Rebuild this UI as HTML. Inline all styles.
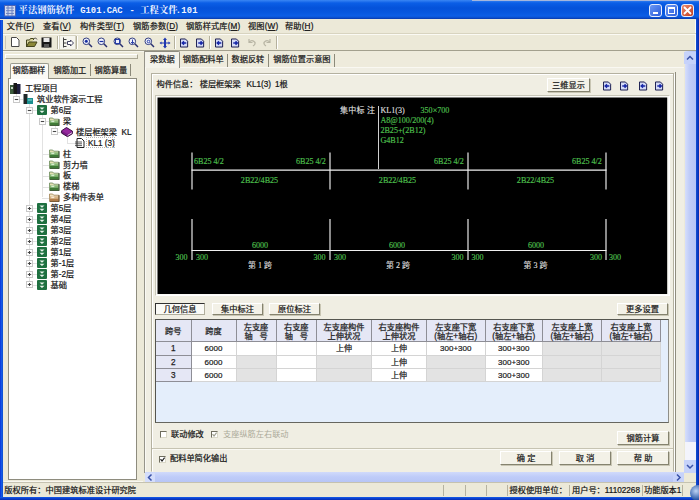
<!DOCTYPE html>
<html><head><meta charset="utf-8"><title>平法钢筋软件</title>
<style>
html,body{margin:0;padding:0;}
body{width:699px;height:500px;overflow:hidden;position:relative;background:#ECE9D8;font-family:"Liberation Sans","Noto Sans CJK SC",sans-serif;font-size:8.2px;color:#000;}
.a{position:absolute;white-space:nowrap;}
.t{position:absolute;white-space:nowrap;line-height:12px;height:12px;color:#101010;-webkit-text-stroke:0.22px #202020;}
.c{position:absolute;white-space:nowrap;line-height:12px;height:12px;text-align:center;color:#101010;}
#title{left:0;top:0;width:699px;height:19.300px;background:linear-gradient(#3A86F4 0,#0B5EE6 3px,#0452DA 8px,#0656DE 12px,#0C5EE6 16px,#0A50D0 17.500px,#0834A4 19.300px);}
#title .txt{left:19px;top:2.900px;color:#F0F4FF;font-weight:bold;font-size:9.3px;line-height:14px;font-family:"Liberation Serif","Noto Serif CJK SC",serif;}
#title .txt i{font-style:normal;font-family:"Liberation Mono",monospace;font-size:8.8px;}
.wb{position:absolute;top:3.800px;width:11.200px;height:11.400px;border:1px solid #E8EEFC;border-radius:3px;background:linear-gradient(135deg,#6A98F4,#2A5CDC);box-sizing:content-box}
.btn{-webkit-text-stroke:0.22px #202020;position:absolute;box-sizing:border-box;background:#F3F1E7;border:1px solid;border-color:#FFFFFF #85836F #85836F #FFFFFF;box-shadow:1px 1px 0 #C9C6B4;text-align:center;font-size:8.2px;line-height:12px;padding-top:0.8px;white-space:nowrap;color:#101010}
.g{fill:#4CBE4C;stroke:#4CBE4C;stroke-width:0.18px;font-family:"Liberation Serif",serif;font-size:8.1px;}
.w{fill:#DCDCDC;stroke:#DCDCDC;stroke-width:0.15px;font-family:"Liberation Serif","Noto Sans CJK SC",serif;font-size:8.1px;}
.hd{-webkit-text-stroke:0.25px #282828;position:absolute;box-sizing:border-box;background:#E5E7F5;border-right:1px solid #8E8E96;border-bottom:1px solid #8E8E96;text-align:center;line-height:9px;font-size:8.2px;color:#181818;white-space:nowrap;}
.cell{-webkit-text-stroke:0.2px #282828;position:absolute;box-sizing:border-box;padding-top:1.3px;background:#fff;border-right:1px solid #D4D4D4;border-bottom:1px solid #D4D4D4;text-align:center;line-height:12px;font-size:8px;white-space:nowrap;color:#101010}
.dis{background:#E3E3E3}
</style></head><body>
<div id="title" class="a">
 <svg class="a" style="left:3.500px;top:4.500px" width="13" height="12"><rect x="0.500" y="0.500" width="11" height="10.500" fill="#D2DCF0" stroke="#4A64B8"/><path d="M2 3h8M2 5.700h8M2 8.400h8M4 1v10M8 1v10" stroke="#6A80C0" stroke-width="1" fill="none"/></svg>
 <div class="a txt" style="left:18.6px">平法钢筋软件</div><div class="a txt" style="left:80.3px"><i>G101.CAC</i></div><div class="a txt" style="left:129.5px"><i>-</i></div><div class="a txt" style="left:140.3px">工程文件</div><div class="a txt" style="left:175.7px"><i style="letter-spacing:0.25px">.101</i></div>
 <div class="wb" style="left:649.300px"><div class="a" style="left:2.500px;top:7px;width:5px;height:2px;background:#fff"></div></div>
 <div class="wb" style="left:665.200px"><div class="a" style="left:2.200px;top:2.200px;width:5px;height:4.200px;border:1px solid #fff;border-top-width:2px;box-sizing:content-box"></div></div>
 <div class="wb" style="left:681px;background:linear-gradient(135deg,#EC8C70,#C23C1E)"><svg class="a" style="left:1.100px;top:1.200px" width="9" height="9"><path d="M1 1L8 8M8 1L1 8" stroke="#fff" stroke-width="1.8"/></svg></div>
</div>
<div class="a" style="left:472px;top:0;width:227px;height:1.200px;background:#A4B6DC"></div>
<div class="a" style="left:695px;top:20px;width:1px;height:31px;background:#FBFBF8"></div>
<div class="a" style="left:0;top:20px;width:3px;height:480px;background:linear-gradient(90deg,#0831D9,#1660E8 60%,#0A48C8)"></div>
<div class="a" style="left:696.400px;top:19px;width:2.600px;height:481px;background:linear-gradient(90deg,#1250D0,#0A3CC8 50%,#0628A8)"></div>
<div class="a" style="left:0;top:497px;width:699px;height:3px;background:linear-gradient(#1660E8,#0A3ACC 60%,#0831B0)"></div>
<div class="t" style="left:6.8px;top:21px;letter-spacing:0.15px">文件(<u>F</u>)</div>
<div class="t" style="left:43.0px;top:21px;letter-spacing:0.15px">查看(<u>V</u>)</div>
<div class="t" style="left:80.0px;top:21px;letter-spacing:0.15px">构件类型(<u>T</u>)</div>
<div class="t" style="left:133.0px;top:21px;letter-spacing:0.15px">钢筋参数(<u>D</u>)</div>
<div class="t" style="left:186.0px;top:21px;letter-spacing:0.15px">钢筋样式库(<u>M</u>)</div>
<div class="t" style="left:248.0px;top:21px;letter-spacing:0.15px">视图(<u>W</u>)</div>
<div class="t" style="left:285.0px;top:21px;letter-spacing:0.15px">帮助(<u>H</u>)</div>
<div class="a" style="left:3px;top:34px;width:693px;height:1px;background:#FBFAF4"></div>
<div class="a" style="left:3px;top:33px;width:693px;height:1px;background:#D8D4C0"></div>
<div class="a" style="left:3px;top:50px;width:693px;height:1px;background:#A3A08E"></div>
<div class="a" style="left:3px;top:51px;width:141px;height:1px;background:#F6F5EC"></div>
<div class="a" style="left:57px;top:36px;width:1px;height:13px;background:#B5B19D"></div><div class="a" style="left:58px;top:36px;width:1px;height:13px;background:#fff"></div>
<div class="a" style="left:76px;top:36px;width:1px;height:13px;background:#B5B19D"></div><div class="a" style="left:77px;top:36px;width:1px;height:13px;background:#fff"></div>
<div class="a" style="left:174px;top:36px;width:1px;height:13px;background:#B5B19D"></div><div class="a" style="left:175px;top:36px;width:1px;height:13px;background:#fff"></div>
<div class="a" style="left:209px;top:36px;width:1px;height:13px;background:#B5B19D"></div><div class="a" style="left:210px;top:36px;width:1px;height:13px;background:#fff"></div>
<div class="a" style="left:276px;top:36px;width:1px;height:13px;background:#B5B19D"></div><div class="a" style="left:277px;top:36px;width:1px;height:13px;background:#fff"></div>
<div class="a" style="left:5px;top:36px;width:1px;height:13px;background:#C9C6B4"></div>
<svg class="a" style="left:11px;top:37px" width="10" height="11"><path d="M0.500 0.500h5l2.500 2.500v6.500h-7.500z" fill="#fff" stroke="#484848"/></svg>
<svg class="a" style="left:26px;top:37px" width="12" height="11"><path d="M0.5 10V3h3l1-1.500h3V3" fill="#D8D49C" stroke="#45451C" stroke-width="1"/><path d="M0.500 9.500l2.500-4.500h8l-2.500 4.500z" fill="#8C8838" stroke="#45451C" stroke-width="1"/><path d="M8 1.500q2-1.500 3 1" stroke="#303030" fill="none" stroke-width="0.8"/></svg>
<svg class="a" style="left:41px;top:37px" width="11" height="11"><rect x="0.5" y="0.5" width="10" height="10" fill="#181818"/><rect x="2.500" y="1" width="6" height="4" fill="#E8E8E8"/><rect x="3" y="7" width="5" height="3.500" fill="#585858"/></svg>
<div class="a" style="left:59px;top:35px;width:17px;height:15px;box-sizing:border-box;background:#F6F5EE;border:1px solid #D6D3C2"></div>
<svg class="a" style="left:62px;top:37px" width="12" height="11"><path d="M1.500 0.500V10.500M1.500 2.500h3M1.500 6h3M1.500 9.500h3" stroke="#404040" fill="none"/><path d="M5.500 4.500h3V3l3 3l-3 3V7.500h-3z" fill="#fff" stroke="#303050" stroke-width="0.9"/></svg>
<svg class="a" style="left:82px;top:37px" width="12" height="12"><circle cx="4.300" cy="4.300" r="3.300" fill="#F0F2FC" stroke="#303C80" stroke-width="1"/><path d="M6.800 6.800L10 10" stroke="#283070" stroke-width="1.500"/><circle cx="4.300" cy="4.300" r="1.500" fill="#1830A0"/></svg>
<svg class="a" style="left:97px;top:37px" width="12" height="12"><circle cx="4.300" cy="4.300" r="3.300" fill="#F0F2FC" stroke="#303C80" stroke-width="1"/><path d="M6.800 6.800L10 10" stroke="#283070" stroke-width="1.500"/><path d="M2.500 4.500h4" stroke="#1830A0" stroke-width="1.2"/></svg>
<svg class="a" style="left:113px;top:37px" width="12" height="12"><circle cx="4.300" cy="4.300" r="3.300" fill="#F0F2FC" stroke="#303C80" stroke-width="1"/><path d="M6.800 6.800L10 10" stroke="#283070" stroke-width="1.500"/><rect x="2.500" y="2.500" width="4" height="4" fill="none" stroke="#1830A0" stroke-width="0.9"/></svg>
<svg class="a" style="left:128px;top:37px" width="12" height="12"><circle cx="4.300" cy="4.300" r="3.300" fill="#F0F2FC" stroke="#303C80" stroke-width="1"/><path d="M6.800 6.800L10 10" stroke="#283070" stroke-width="1.500"/><path d="M4.500 2.500v4M3 5l1.500 1.500L6 5" stroke="#1830A0" stroke-width="0.9" fill="none"/></svg>
<svg class="a" style="left:144px;top:37px" width="12" height="12"><circle cx="4.300" cy="4.300" r="3.300" fill="#F0F2FC" stroke="#303C80" stroke-width="1"/><path d="M6.800 6.800L10 10" stroke="#283070" stroke-width="1.500"/><circle cx="4.5" cy="4.5" r="1.3" fill="none" stroke="#1830A0" stroke-width="0.9"/></svg>
<svg class="a" style="left:159px;top:37px" width="12" height="12"><path d="M6 0.500L8 3H7v2.500h2.500V4.500L11.500 6L9.500 7.500V6.500H7V9h1L6 11.500L4 9h1V6.500H2.500v1L0.500 6l2-1.500v1H5V3H4z" fill="#2038B0"/></svg>
<svg class="a" style="left:180.0px;top:38.0px" width="9" height="10" viewBox="0 -0.6 10 11.200"><path d="M0.500 0.500h5.500l2.500 2.500v6.500h-8z" fill="#D4DAF6" stroke="#181C50" stroke-width="1.100"/><path d="M7 5h-4M4.500 3.200L2.500 5l2 1.800" stroke="#1828A8" stroke-width="1.700" fill="none"/></svg>
<svg class="a" style="left:196.0px;top:38.0px" width="9" height="10" viewBox="0 -0.6 10 11.200"><path d="M0.500 0.500h5.500l2.500 2.500v6.500h-8z" fill="#D4DAF6" stroke="#181C50" stroke-width="1.100"/><path d="M2.500 5h4M5 3.200L7 5L5 6.800" stroke="#1828A8" stroke-width="1.700" fill="none"/></svg>
<svg class="a" style="left:215.0px;top:38.0px" width="9" height="10" viewBox="0 -0.6 10 11.200"><path d="M0.500 0.500h5.500l2.500 2.500v6.500h-8z" fill="#D4DAF6" stroke="#181C50" stroke-width="1.100"/><path d="M7 5h-4M4.500 3.200L2.500 5l2 1.800" stroke="#1828A8" stroke-width="1.700" fill="none"/></svg>
<svg class="a" style="left:231.0px;top:38.0px" width="9" height="10" viewBox="0 -0.6 10 11.200"><path d="M0.500 0.500h5.500l2.500 2.500v6.500h-8z" fill="#D4DAF6" stroke="#181C50" stroke-width="1.100"/><path d="M2.500 5h4M5 3.200L7 5L5 6.800" stroke="#1828A8" stroke-width="1.700" fill="none"/></svg>
<svg class="a" style="left:247px;top:38px" width="10" height="9"><path d="M2 1v3.500h3.500M2.200 4.300Q5 1 8 4.500Q8.500 6.500 6 8" stroke="#B8B5A4" stroke-width="1.200" fill="none"/></svg>
<svg class="a" style="left:262px;top:38px" width="10" height="9"><path d="M8 1v3.500h-3.500M7.800 4.300Q5 1 2 4.500Q1.500 6.500 4 8" stroke="#B8B5A4" stroke-width="1.200" fill="none"/></svg>
<div class="a" style="left:5px;top:54px;width:133px;height:5px;box-sizing:border-box;border:1px solid;border-color:#fff #A9A693 #A9A693 #fff;background:#EFEDE0"></div>
<div class="a" style="left:8.300px;top:78px;width:128.500px;height:401.700px;box-sizing:border-box;background:#fff;border:1px solid #8E8C7E"></div>
<div class="a" style="left:4px;top:481.300px;width:139px;height:1px;background:#F8F7F0"></div>
<div class="a" style="left:10px;top:63px;width:39px;height:16px;box-sizing:border-box;background:#FBFAF6;border:1px solid #9A9A8E;border-bottom:none;border-radius:2px 2px 0 0"></div>
<div class="t" style="left:12.5px;top:64.8px">钢筋翻样</div>
<div class="t" style="left:53.5px;top:64.8px">钢筋加工</div>
<div class="t" style="left:94.5px;top:64.8px">钢筋算量</div>
<div class="a" style="left:90px;top:64px;width:1px;height:12px;background:#8C8A7A"></div>
<div class="a" style="left:130px;top:64px;width:1px;height:12px;background:#8C8A7A"></div>
<div class="a" style="left:16.0px;top:93.2px;width:1px;height:5.9px;background:#E2E2E2"></div>
<div class="a" style="left:29.0px;top:104.1px;width:1px;height:180.8px;background:#E2E2E2"></div>
<div class="a" style="left:42.0px;top:115.1px;width:1px;height:82.4px;background:#E2E2E2"></div>
<div class="a" style="left:54.5px;top:126.0px;width:1px;height:5.9px;background:#E2E2E2"></div>
<div class="a" style="left:67.0px;top:136.9px;width:1px;height:5.9px;background:#E2E2E2"></div>
<div class="a" style="left:16.0px;top:99.1px;width:7.0px;height:1px;background:#E2E2E2"></div>
<div class="a" style="left:29.0px;top:110.1px;width:8.0px;height:1px;background:#E2E2E2"></div>
<div class="a" style="left:29.0px;top:208.4px;width:8.0px;height:1px;background:#E2E2E2"></div>
<div class="a" style="left:29.0px;top:219.4px;width:8.0px;height:1px;background:#E2E2E2"></div>
<div class="a" style="left:29.0px;top:230.3px;width:8.0px;height:1px;background:#E2E2E2"></div>
<div class="a" style="left:29.0px;top:241.2px;width:8.0px;height:1px;background:#E2E2E2"></div>
<div class="a" style="left:29.0px;top:252.1px;width:8.0px;height:1px;background:#E2E2E2"></div>
<div class="a" style="left:29.0px;top:263.1px;width:8.0px;height:1px;background:#E2E2E2"></div>
<div class="a" style="left:29.0px;top:274.0px;width:8.0px;height:1px;background:#E2E2E2"></div>
<div class="a" style="left:29.0px;top:284.9px;width:8.0px;height:1px;background:#E2E2E2"></div>
<div class="a" style="left:42.0px;top:121.0px;width:7.0px;height:1px;background:#E2E2E2"></div>
<div class="a" style="left:42.0px;top:153.8px;width:7.0px;height:1px;background:#E2E2E2"></div>
<div class="a" style="left:42.0px;top:164.7px;width:7.0px;height:1px;background:#E2E2E2"></div>
<div class="a" style="left:42.0px;top:175.6px;width:7.0px;height:1px;background:#E2E2E2"></div>
<div class="a" style="left:42.0px;top:186.6px;width:7.0px;height:1px;background:#E2E2E2"></div>
<div class="a" style="left:42.0px;top:197.5px;width:7.0px;height:1px;background:#E2E2E2"></div>
<div class="a" style="left:54.5px;top:131.9px;width:6.5px;height:1px;background:#E2E2E2"></div>
<div class="a" style="left:67.0px;top:142.8px;width:8.0px;height:1px;background:#E2E2E2"></div>
<svg class="a" style="left:10.0px;top:82.7px" width="11" height="11"><rect x="0" y="2" width="4" height="9" fill="#3C5A3C"/><rect x="3.5" y="0" width="3.5" height="11" fill="#181818"/><rect x="7" y="1" width="3.5" height="10" fill="#202040"/><rect x="1" y="4" width="2" height="2" fill="#C8D8C8"/></svg>
<div class="t" style="left:25.0px;top:83.0px">工程项目</div>
<svg class="a" style="left:12.5px;top:95.6px" width="7" height="7"><rect x="0.5" y="0.5" width="6" height="6" fill="#fff" stroke="#C8C8C8"/><path d="M1.800 3.500h3.400" stroke="#484848" stroke-width="1.100"/></svg>
<svg class="a" style="left:23.0px;top:94.1px" width="10" height="10"><rect x="0.5" y="0" width="4" height="10" fill="#202828"/><rect x="4" y="4" width="6" height="6" fill="#1C9090"/><rect x="5" y="5.5" width="4" height="1" fill="#8CD8D8"/></svg>
<div class="t" style="left:37.0px;top:93.9px">筑业软件演示工程</div>
<svg class="a" style="left:25.5px;top:106.6px" width="7" height="7"><rect x="0.5" y="0.5" width="6" height="6" fill="#fff" stroke="#C8C8C8"/><path d="M1.800 3.500h3.400" stroke="#484848" stroke-width="1.100"/></svg>
<svg class="a" style="left:37.0px;top:105.1px" width="10" height="10"><rect x="0" y="0" width="10" height="10" rx="1" fill="#1E7040"/><path d="M2.5 2.5h5L5 4.7zM2.5 5.8h5L5 8z" fill="#E8F4EC"/></svg>
<div class="t" style="left:50.5px;top:104.9px">第6层</div>
<svg class="a" style="left:38.5px;top:117.5px" width="7" height="7"><rect x="0.5" y="0.5" width="6" height="6" fill="#fff" stroke="#C8C8C8"/><path d="M1.800 3.500h3.400" stroke="#484848" stroke-width="1.100"/></svg>
<svg class="a" style="left:49.0px;top:116.5px" width="11" height="9"><path d="M0.5 1h3.200l1 1.200h5v6h-9.200z" fill="#E4E0B4" stroke="#6A8A5A" stroke-width="0.8"/><rect x="0.9" y="3.300" width="8.600" height="5" fill="#86B876"/><rect x="0.9" y="5.800" width="8.600" height="2.600" fill="#3F7A37"/><rect x="2.300" y="3.600" width="3" height="1.500" fill="#D8ECD0"/><path d="M10 2.200v6.600h-9.300" stroke="#2C4426" stroke-width="1" fill="none"/></svg>
<div class="t" style="left:63.0px;top:115.8px">梁</div>
<svg class="a" style="left:51.0px;top:128.4px" width="7" height="7"><rect x="0.5" y="0.5" width="6" height="6" fill="#fff" stroke="#C8C8C8"/><path d="M1.800 3.500h3.400" stroke="#484848" stroke-width="1.100"/></svg>
<svg class="a" style="left:61.0px;top:126.9px" width="12" height="10"><path d="M0.5 3.800L5.500 0.500L11.500 4.200L11.300 6.800L6.500 9.700L0.700 6.200z" fill="#7A1C86" stroke="#2C0834" stroke-width="0.9"/><path d="M1 4L5.500 1.200L10.800 4.400L6.500 7z" fill="#96289E"/><path d="M6.600 8.400L11 5.700" stroke="#F0E4F4" stroke-width="0.9" fill="none"/></svg>
<div class="t" style="left:76.0px;top:126.7px">楼层框架梁&nbsp; KL</div>
<svg class="a" style="left:75.0px;top:137.8px" width="10" height="10"><path d="M2 0.500h4.500l2.500 2.500v6.500h-7z" fill="#fff" stroke="#202020" stroke-width="1"/><path d="M0 4h7M0 5.800h7M0 7.600h7" stroke="#303030" stroke-width="0.8"/></svg>
<div class="t" style="left:88.0px;top:137.7px">KL1 (3)</div>
<svg class="a" style="left:49.0px;top:149.3px" width="11" height="9"><path d="M0.5 1h3.200l1 1.200h5v6h-9.200z" fill="#E4E0B4" stroke="#6A8A5A" stroke-width="0.8"/><rect x="0.9" y="3.300" width="8.600" height="5" fill="#86B876"/><rect x="0.9" y="5.800" width="8.600" height="2.600" fill="#3F7A37"/><rect x="2.300" y="3.600" width="3" height="1.500" fill="#D8ECD0"/><path d="M10 2.200v6.600h-9.300" stroke="#2C4426" stroke-width="1" fill="none"/></svg>
<div class="t" style="left:63.0px;top:148.6px">柱</div>
<svg class="a" style="left:49.0px;top:160.2px" width="11" height="9"><path d="M0.5 1h3.200l1 1.200h5v6h-9.200z" fill="#E4E0B4" stroke="#6A8A5A" stroke-width="0.8"/><rect x="0.9" y="3.300" width="8.600" height="5" fill="#86B876"/><rect x="0.9" y="5.800" width="8.600" height="2.600" fill="#3F7A37"/><rect x="2.300" y="3.600" width="3" height="1.500" fill="#D8ECD0"/><path d="M10 2.200v6.600h-9.300" stroke="#2C4426" stroke-width="1" fill="none"/></svg>
<div class="t" style="left:63.0px;top:159.5px">剪力墙</div>
<svg class="a" style="left:49.0px;top:171.1px" width="11" height="9"><path d="M0.5 1h3.200l1 1.200h5v6h-9.200z" fill="#E4E0B4" stroke="#6A8A5A" stroke-width="0.8"/><rect x="0.9" y="3.300" width="8.600" height="5" fill="#86B876"/><rect x="0.9" y="5.800" width="8.600" height="2.600" fill="#3F7A37"/><rect x="2.300" y="3.600" width="3" height="1.500" fill="#D8ECD0"/><path d="M10 2.200v6.600h-9.300" stroke="#2C4426" stroke-width="1" fill="none"/></svg>
<div class="t" style="left:63.0px;top:170.4px">板</div>
<svg class="a" style="left:49.0px;top:182.1px" width="11" height="9"><path d="M0.5 1h3.200l1 1.200h5v6h-9.200z" fill="#E4E0B4" stroke="#6A8A5A" stroke-width="0.8"/><rect x="0.9" y="3.300" width="8.600" height="5" fill="#86B876"/><rect x="0.9" y="5.800" width="8.600" height="2.600" fill="#3F7A37"/><rect x="2.300" y="3.600" width="3" height="1.500" fill="#D8ECD0"/><path d="M10 2.200v6.600h-9.300" stroke="#2C4426" stroke-width="1" fill="none"/></svg>
<div class="t" style="left:63.0px;top:181.4px">楼梯</div>
<svg class="a" style="left:49.0px;top:193.0px" width="11" height="9"><path d="M0.5 1h3.200l1 1.200h5v6h-9.200z" fill="#F0E4C4" stroke="#A08050" stroke-width="0.8"/><rect x="0.9" y="3.300" width="8.600" height="5" fill="#D8B488"/><rect x="0.9" y="5.800" width="8.600" height="2.600" fill="#B07C48"/><rect x="2.300" y="3.600" width="3" height="1.500" fill="#F8ECD8"/><path d="M10 2.200v6.600h-9.300" stroke="#5C4020" stroke-width="1" fill="none"/></svg>
<div class="t" style="left:63.0px;top:192.3px">多构件表单</div>
<svg class="a" style="left:25.5px;top:204.9px" width="7" height="7"><rect x="0.5" y="0.5" width="6" height="6" fill="#fff" stroke="#C8C8C8"/><path d="M1.800 3.500h3.400M3.5 2v3" stroke="#484848" stroke-width="1.100"/></svg>
<svg class="a" style="left:37.0px;top:203.4px" width="10" height="10"><rect x="0" y="0" width="10" height="10" rx="1" fill="#1E7040"/><path d="M2.5 2.5h5L5 4.7zM2.5 5.8h5L5 8z" fill="#E8F4EC"/></svg>
<div class="t" style="left:50.5px;top:203.2px">第5层</div>
<svg class="a" style="left:25.5px;top:215.9px" width="7" height="7"><rect x="0.5" y="0.5" width="6" height="6" fill="#fff" stroke="#C8C8C8"/><path d="M1.800 3.500h3.400M3.5 2v3" stroke="#484848" stroke-width="1.100"/></svg>
<svg class="a" style="left:37.0px;top:214.4px" width="10" height="10"><rect x="0" y="0" width="10" height="10" rx="1" fill="#1E7040"/><path d="M2.5 2.5h5L5 4.7zM2.5 5.8h5L5 8z" fill="#E8F4EC"/></svg>
<div class="t" style="left:50.5px;top:214.2px">第4层</div>
<svg class="a" style="left:25.5px;top:226.8px" width="7" height="7"><rect x="0.5" y="0.5" width="6" height="6" fill="#fff" stroke="#C8C8C8"/><path d="M1.800 3.500h3.400M3.5 2v3" stroke="#484848" stroke-width="1.100"/></svg>
<svg class="a" style="left:37.0px;top:225.3px" width="10" height="10"><rect x="0" y="0" width="10" height="10" rx="1" fill="#1E7040"/><path d="M2.5 2.5h5L5 4.7zM2.5 5.8h5L5 8z" fill="#E8F4EC"/></svg>
<div class="t" style="left:50.5px;top:225.1px">第3层</div>
<svg class="a" style="left:25.5px;top:237.7px" width="7" height="7"><rect x="0.5" y="0.5" width="6" height="6" fill="#fff" stroke="#C8C8C8"/><path d="M1.800 3.500h3.400M3.5 2v3" stroke="#484848" stroke-width="1.100"/></svg>
<svg class="a" style="left:37.0px;top:236.2px" width="10" height="10"><rect x="0" y="0" width="10" height="10" rx="1" fill="#1E7040"/><path d="M2.5 2.5h5L5 4.7zM2.5 5.8h5L5 8z" fill="#E8F4EC"/></svg>
<div class="t" style="left:50.5px;top:236.0px">第2层</div>
<svg class="a" style="left:25.5px;top:248.6px" width="7" height="7"><rect x="0.5" y="0.5" width="6" height="6" fill="#fff" stroke="#C8C8C8"/><path d="M1.800 3.500h3.400M3.5 2v3" stroke="#484848" stroke-width="1.100"/></svg>
<svg class="a" style="left:37.0px;top:247.1px" width="10" height="10"><rect x="0" y="0" width="10" height="10" rx="1" fill="#1E7040"/><path d="M2.5 2.5h5L5 4.7zM2.5 5.8h5L5 8z" fill="#E8F4EC"/></svg>
<div class="t" style="left:50.5px;top:246.9px">第1层</div>
<svg class="a" style="left:25.5px;top:259.6px" width="7" height="7"><rect x="0.5" y="0.5" width="6" height="6" fill="#fff" stroke="#C8C8C8"/><path d="M1.800 3.500h3.400M3.5 2v3" stroke="#484848" stroke-width="1.100"/></svg>
<svg class="a" style="left:37.0px;top:258.1px" width="10" height="10"><rect x="0" y="0" width="10" height="10" rx="1" fill="#1E7040"/><path d="M2.5 2.5h5L5 4.7zM2.5 5.8h5L5 8z" fill="#E8F4EC"/></svg>
<div class="t" style="left:50.5px;top:257.9px">第-1层</div>
<svg class="a" style="left:25.5px;top:270.5px" width="7" height="7"><rect x="0.5" y="0.5" width="6" height="6" fill="#fff" stroke="#C8C8C8"/><path d="M1.800 3.500h3.400M3.5 2v3" stroke="#484848" stroke-width="1.100"/></svg>
<svg class="a" style="left:37.0px;top:269.0px" width="10" height="10"><rect x="0" y="0" width="10" height="10" rx="1" fill="#1E7040"/><path d="M2.5 2.5h5L5 4.7zM2.5 5.8h5L5 8z" fill="#E8F4EC"/></svg>
<div class="t" style="left:50.5px;top:268.8px">第-2层</div>
<svg class="a" style="left:25.5px;top:281.4px" width="7" height="7"><rect x="0.5" y="0.5" width="6" height="6" fill="#fff" stroke="#C8C8C8"/><path d="M1.800 3.500h3.400M3.5 2v3" stroke="#484848" stroke-width="1.100"/></svg>
<svg class="a" style="left:37.0px;top:279.9px" width="10" height="10"><rect x="0" y="0" width="10" height="10" rx="1" fill="#1E7040"/><path d="M2.5 2.5h5L5 4.7zM2.5 5.8h5L5 8z" fill="#E8F4EC"/></svg>
<div class="t" style="left:50.5px;top:279.7px">基础</div>
<div class="a" style="left:86px;top:137.0px;width:29px;height:11px;box-sizing:border-box;border:1px dotted #B8B8B8"></div>
<div class="a" style="left:144px;top:66.5px;width:540px;height:406px;box-sizing:border-box;background:#F0EEE3;border-top:1px solid #F9F8F2"></div>
<div class="a" style="left:144px;top:51px;width:540px;height:15.500px;background:#EEEBDC"></div>
<div class="a" style="left:144px;top:51px;width:35.500px;height:16.500px;box-sizing:border-box;background:#F4F3EB;border:1px solid #8E8C80;border-bottom:none;border-radius:1px 2px 0 0"></div>
<div class="a" style="left:144px;top:51px;width:1px;height:421.500px;background:#96948A"></div><div class="a" style="left:145px;top:67px;width:1px;height:405.500px;background:#FAF9F4"></div>
<div class="t" style="left:150.0px;top:54.300px">梁数据</div>
<div class="t" style="left:182.8px;top:54.300px">钢筋配料单</div>
<div class="t" style="left:231.5px;top:54.300px">数据反转</div>
<div class="t" style="left:273.2px;top:54.300px">钢筋位置示意图</div>
<div class="a" style="left:227px;top:53.500px;width:1px;height:13px;background:#8C8A7A"></div>
<div class="a" style="left:268px;top:53.500px;width:1px;height:13px;background:#8C8A7A"></div>
<div class="a" style="left:334px;top:53.500px;width:1px;height:13px;background:#8C8A7A"></div>
<div class="a" style="left:150.5px;top:73px;width:523px;height:420px;box-sizing:border-box;border:1px solid #B4B1A0;box-shadow:1px 1px 0 #fff, inset 1px 1px 0 #fff;clip-path:inset(0 -2px 21.5px 0)"></div>
<div class="a" style="left:675px;top:72px;width:1px;height:400.5px;background:#8F8D7E"></div>
<div class="t" style="left:156.5px;top:78.5px">构件信息： 楼层框架梁</div>
<div class="t" style="left:246.5px;top:78.5px">KL1(3)</div>
<div class="t" style="left:275px;top:78.5px">1根</div>
<div class="btn" style="left:547px;top:78px;width:43px;height:14px">三维显示</div>
<svg class="a" style="left:603.0px;top:80.5px" width="9" height="10" viewBox="0 -0.6 10 11.200"><path d="M0.500 0.500h5.500l2.500 2.500v6.500h-8z" fill="#D4DAF6" stroke="#181C50" stroke-width="1.100"/><path d="M7 5h-4M4.500 3.200L2.500 5l2 1.800" stroke="#1828A8" stroke-width="1.700" fill="none"/></svg>
<svg class="a" style="left:620.0px;top:80.5px" width="9" height="10" viewBox="0 -0.6 10 11.200"><path d="M0.500 0.500h5.500l2.500 2.500v6.500h-8z" fill="#D4DAF6" stroke="#181C50" stroke-width="1.100"/><path d="M2.500 5h4M5 3.200L7 5L5 6.800" stroke="#1828A8" stroke-width="1.700" fill="none"/></svg>
<svg class="a" style="left:639.0px;top:80.5px" width="9" height="10" viewBox="0 -0.6 10 11.200"><path d="M0.500 0.500h5.500l2.500 2.500v6.500h-8z" fill="#D4DAF6" stroke="#181C50" stroke-width="1.100"/><path d="M7 5h-4M4.500 3.200L2.500 5l2 1.800" stroke="#1828A8" stroke-width="1.700" fill="none"/></svg>
<svg class="a" style="left:655.0px;top:80.5px" width="9" height="10" viewBox="0 -0.6 10 11.200"><path d="M0.500 0.500h5.500l2.500 2.500v6.500h-8z" fill="#D4DAF6" stroke="#181C50" stroke-width="1.100"/><path d="M2.500 5h4M5 3.200L7 5L5 6.800" stroke="#1828A8" stroke-width="1.700" fill="none"/></svg>
<div class="a" style="left:155px;top:95px;width:514.5px;height:200.5px;box-sizing:border-box;border:1px solid;border-color:#C8C6B8 #fff #fff #C8C6B8;background:#FAFAF6"></div>
<svg class="a" style="left:157px;top:97px" width="511" height="197" viewBox="157 97 511 197"><rect x="157.500" y="97.500" width="509.700" height="196.500" fill="#000"/>
<path d="M191.500 170.100H606.500" stroke="#F0F0F0" stroke-width="1.200"/>
<path d="M191.500 250.500H606.500" stroke="#F0F0F0" stroke-width="1.100"/>
<path d="M192.0 152.500V189.500M192.0 219V260" stroke="#F0F0F0" stroke-width="1.150"/>
<path d="M330.0 152.500V189.500M330.0 219V260" stroke="#F0F0F0" stroke-width="1.150"/>
<path d="M468.0 152.500V189.500M468.0 219V260" stroke="#F0F0F0" stroke-width="1.150"/>
<path d="M606.0 152.500V189.500M606.0 219V260" stroke="#F0F0F0" stroke-width="1.150"/>
<path d="M378.5 106V169" stroke="#D0D0D0" stroke-width="1"/>
<text x="340" y="113" class="w" style="font-size:8px;letter-spacing:0.25px">集中标 注</text>
<text x="380.4" y="112.9" class="w" text-anchor="start">KL1(3)</text>
<text x="420.5" y="112.9" class="g" text-anchor="start">350×700</text>
<text x="380.4" y="122.9" class="g" text-anchor="start">A8@100/200(4)</text>
<text x="380.4" y="132.9" class="g" text-anchor="start">2B25+(2B12)</text>
<text x="380.4" y="142.6" class="g" text-anchor="start">G4B12</text>
<text x="194.0" y="163.7" class="g" text-anchor="start">6B25 4/2</text>
<text x="296.0" y="163.7" class="g" text-anchor="start">6B25 4/2</text>
<text x="434.0" y="163.7" class="g" text-anchor="start">6B25 4/2</text>
<text x="572.0" y="163.7" class="g" text-anchor="start">6B25 4/2</text>
<text x="259.5" y="182.9" class="g" text-anchor="middle">2B22/4B25</text>
<text x="397.5" y="182.9" class="g" text-anchor="middle">2B22/4B25</text>
<text x="535.5" y="182.9" class="g" text-anchor="middle">2B22/4B25</text>
<text x="260.0" y="247.9" class="g" text-anchor="middle">6000</text>
<text x="397.0" y="247.9" class="g" text-anchor="middle">6000</text>
<text x="536.0" y="247.9" class="g" text-anchor="middle">6000</text>
<text x="175.5" y="259.6" class="g" text-anchor="start">300</text>
<text x="196.0" y="259.6" class="g" text-anchor="start">300</text>
<text x="313.5" y="259.6" class="g" text-anchor="start">300</text>
<text x="334.0" y="259.6" class="g" text-anchor="start">300</text>
<text x="451.5" y="259.6" class="g" text-anchor="start">300</text>
<text x="471.5" y="259.6" class="g" text-anchor="start">300</text>
<text x="590.0" y="259.6" class="g" text-anchor="start">300</text>
<text x="609.0" y="259.6" class="g" text-anchor="start">300</text>
<text x="248.0" y="268" class="w" style="font-size:8px">第 1 跨</text>
<text x="386.0" y="268" class="w" style="font-size:8px">第 2 跨</text>
<text x="523.5" y="268" class="w" style="font-size:8px">第 3 跨</text>
</svg>
<div class="btn" style="left:155px;top:303px;width:50px;height:12px;background:#FAFAF6;border-color:#303030 #B0AE9C #B0AE9C #303030;box-shadow:none;line-height:10px;padding-top:0.6px">几何信息</div>
<div class="btn" style="left:212px;top:303px;width:51px;height:12px;line-height:10px;padding-top:0.6px">集中标注</div>
<div class="btn" style="left:269px;top:303px;width:51px;height:12px;line-height:10px;padding-top:0.6px">原位标注</div>
<div class="btn" style="left:617px;top:303px;width:51px;height:12px;line-height:10px;padding-top:0.6px">更多设置</div>
<div class="a" style="left:155px;top:319px;width:514px;height:104px;box-sizing:border-box;background:#E4EEFB;border:1px solid;border-color:#55554F #8E8E88 #66665F #55554F"></div>
<div class="hd" style="left:156.0px;top:320px;width:35.5px;height:22px;padding-top:7.3px">跨号</div>
<div class="hd" style="left:191.5px;top:320px;width:45.0px;height:22px;padding-top:7.3px">跨度</div>
<div class="hd" style="left:236.5px;top:320px;width:40.0px;height:22px;padding-top:2.5px">左支座<br>轴&nbsp;&nbsp;&nbsp;号</div>
<div class="hd" style="left:276.5px;top:320px;width:40.5px;height:22px;padding-top:2.5px">右支座<br>轴&nbsp;&nbsp;&nbsp;号</div>
<div class="hd" style="left:317.0px;top:320px;width:55.0px;height:22px;padding-top:2.5px">左支座构件<br>上伸状况</div>
<div class="hd" style="left:372.0px;top:320px;width:55.0px;height:22px;padding-top:2.5px">右支座构件<br>上伸状况</div>
<div class="hd" style="left:427.0px;top:320px;width:58.5px;height:22px;padding-top:2.5px">左支座下宽<br>(轴左+轴右)</div>
<div class="hd" style="left:485.5px;top:320px;width:57.5px;height:22px;padding-top:2.5px">右支座下宽<br>(轴左+轴右)</div>
<div class="hd" style="left:543.0px;top:320px;width:59.0px;height:22px;padding-top:2.5px">左支座上宽<br>(轴左+轴右)</div>
<div class="hd" style="left:602.0px;top:320px;width:59.0px;height:22px;padding-top:2.5px">右支座上宽<br>(轴左+轴右)</div>
<div class="hd" style="left:156.0px;top:342.0px;width:35.5px;height:13.5px;line-height:12px;padding-top:1.3px">1</div>
<div class="cell" style="left:191.5px;top:342.0px;width:45.0px;height:13.5px">6000</div>
<div class="cell" style="left:236.5px;top:342.0px;width:40.0px;height:13.5px"></div>
<div class="cell" style="left:276.5px;top:342.0px;width:40.5px;height:13.5px"></div>
<div class="cell" style="left:317.0px;top:342.0px;width:55.0px;height:13.5px">上伸</div>
<div class="cell" style="left:372.0px;top:342.0px;width:55.0px;height:13.5px">上伸</div>
<div class="cell" style="left:427.0px;top:342.0px;width:58.5px;height:13.5px">300+300</div>
<div class="cell" style="left:485.5px;top:342.0px;width:57.5px;height:13.5px">300+300</div>
<div class="cell dis" style="left:543.0px;top:342.0px;width:59.0px;height:13.5px"></div>
<div class="cell dis" style="left:602.0px;top:342.0px;width:59.0px;height:13.5px"></div>
<div class="hd" style="left:156.0px;top:355.5px;width:35.5px;height:13.0px;line-height:12px;padding-top:1.3px">2</div>
<div class="cell" style="left:191.5px;top:355.5px;width:45.0px;height:13.0px">6000</div>
<div class="cell dis" style="left:236.5px;top:355.5px;width:40.0px;height:13.0px"></div>
<div class="cell" style="left:276.5px;top:355.5px;width:40.5px;height:13.0px"></div>
<div class="cell dis" style="left:317.0px;top:355.5px;width:55.0px;height:13.0px"></div>
<div class="cell" style="left:372.0px;top:355.5px;width:55.0px;height:13.0px">上伸</div>
<div class="cell dis" style="left:427.0px;top:355.5px;width:58.5px;height:13.0px"></div>
<div class="cell" style="left:485.5px;top:355.5px;width:57.5px;height:13.0px">300+300</div>
<div class="cell dis" style="left:543.0px;top:355.5px;width:59.0px;height:13.0px"></div>
<div class="cell dis" style="left:602.0px;top:355.5px;width:59.0px;height:13.0px"></div>
<div class="hd" style="left:156.0px;top:368.5px;width:35.5px;height:13.5px;line-height:12px;padding-top:1.3px">3</div>
<div class="cell" style="left:191.5px;top:368.5px;width:45.0px;height:13.5px">6000</div>
<div class="cell dis" style="left:236.5px;top:368.5px;width:40.0px;height:13.5px"></div>
<div class="cell" style="left:276.5px;top:368.5px;width:40.5px;height:13.5px"></div>
<div class="cell dis" style="left:317.0px;top:368.5px;width:55.0px;height:13.5px"></div>
<div class="cell" style="left:372.0px;top:368.5px;width:55.0px;height:13.5px">上伸</div>
<div class="cell dis" style="left:427.0px;top:368.5px;width:58.5px;height:13.5px"></div>
<div class="cell" style="left:485.5px;top:368.5px;width:57.5px;height:13.5px">300+300</div>
<div class="cell dis" style="left:543.0px;top:368.5px;width:59.0px;height:13.5px"></div>
<div class="cell dis" style="left:602.0px;top:368.5px;width:59.0px;height:13.5px"></div>
<div class="a" style="left:160.0px;top:431.0px;width:7px;height:7px;box-sizing:border-box;background:#fff;border:1px solid;border-color:#6E6C5E #DAD8C8 #DAD8C8 #6E6C5E"></div>
<div class="t" style="left:171px;top:428.5px">联动修改</div>
<div class="a" style="left:211.0px;top:431.0px;width:7px;height:7px;box-sizing:border-box;background:#fff;border:1px solid;border-color:#6E6C5E #DAD8C8 #DAD8C8 #6E6C5E"></div><svg class="a" style="left:211.0px;top:431.0px" width="7" height="7"><path d="M1.5 3.2L3 5L5.6 1.6" stroke="#A0A090" stroke-width="1.2" fill="none"/></svg>
<div class="t" style="left:223px;top:428.5px;color:#ACAA9A;-webkit-text-stroke:0">支座纵筋左右联动</div>
<div class="a" style="left:152px;top:448px;width:521px;height:1px;background:#C6C3B2"></div><div class="a" style="left:152px;top:449px;width:521px;height:1px;background:#FAF9F4"></div>
<div class="a" style="left:159.0px;top:455.5px;width:7px;height:7px;box-sizing:border-box;background:#fff;border:1px solid;border-color:#6E6C5E #DAD8C8 #DAD8C8 #6E6C5E"></div><svg class="a" style="left:159.0px;top:455.5px" width="7" height="7"><path d="M1.5 3.2L3 5L5.6 1.6" stroke="#202020" stroke-width="1.2" fill="none"/></svg>
<div class="t" style="left:170px;top:453px">配料单简化输出</div>
<div class="btn" style="left:617px;top:431px;width:52px;height:14px">钢筋计算</div>
<div class="btn" style="left:500px;top:451px;width:52px;height:14px">确 定</div>
<div class="btn" style="left:559px;top:451px;width:52px;height:14px">取 消</div>
<div class="btn" style="left:617px;top:451px;width:52px;height:14px">帮 助</div>
<div class="a" style="left:684.500px;top:51px;width:11.800px;height:422px;background:#F3F4FC"></div>
<div class="a" style="left:684.500px;top:51px;width:11.800px;height:390.500px;background:linear-gradient(90deg,#D6DEFB,#BFCCF8 40%,#B6C4F6)"></div>
<svg class="a" style="left:684px;top:51.500px" width="12" height="12"><rect width="12" height="12" fill="#C6D2FA"/><path d="M3 7.5L6 4.5L9 7.5" stroke="#3A52A8" stroke-width="1.5" fill="none"/></svg>
<svg class="a" style="left:684px;top:460px" width="12" height="13"><rect width="12" height="13" fill="#C6D2FA"/><path d="M3 5L6 8L9 5" stroke="#3A52A8" stroke-width="1.5" fill="none"/></svg>
<div class="a" style="left:145px;top:472.300px;width:539px;height:9.700px;background:linear-gradient(#D0DAFB,#BECBF8 50%,#B8C6F6)"></div>
<svg class="a" style="left:145px;top:472.5px" width="10" height="9"><rect width="10" height="9" fill="#D4DDFB"/><path d="M6.5 1.5L3.5 4.5L6.5 7.5" stroke="#3A52A8" stroke-width="1.5" fill="none"/></svg>
<svg class="a" style="left:673px;top:472.5px" width="11" height="9"><rect width="11" height="9" fill="#C6D2FA"/><path d="M4 1.5L7 4.5L4 7.5" stroke="#3A52A8" stroke-width="1.5" fill="none"/></svg>
<div class="a" style="left:3px;top:482px;width:693px;height:1px;background:#C5C2B0"></div>
<div class="t" style="left:4.300px;top:485.200px;letter-spacing:0.050px">版权所有：中国建筑标准设计研究院</div>
<div class="a" style="left:443px;top:485px;width:1px;height:11px;background:#B5B2A0"></div>
<div class="a" style="left:465px;top:485px;width:1px;height:11px;background:#B5B2A0"></div>
<div class="a" style="left:486px;top:485px;width:1px;height:11px;background:#B5B2A0"></div>
<div class="a" style="left:507px;top:485px;width:1px;height:11px;background:#B5B2A0"></div>
<div class="a" style="left:569px;top:485px;width:1px;height:11px;background:#B5B2A0"></div>
<div class="a" style="left:642px;top:485px;width:1px;height:11px;background:#B5B2A0"></div>
<div class="a" style="left:682px;top:485px;width:1px;height:11px;background:#B5B2A0"></div>
<div class="t" style="left:509.5px;top:485.200px">授权使用单位：</div>
<div class="t" style="left:572px;top:485.200px">用户号：11102268</div>
<div class="t" style="left:644px;top:485.200px">功能版本1</div>
<div class="a" style="left:690px;top:485px;width:16px;height:16px;border-radius:8px;background:radial-gradient(circle at 6px 6px,#BFD4F4,#2C5AA8 60%,#0C2C6C)"></div>
</body></html>
